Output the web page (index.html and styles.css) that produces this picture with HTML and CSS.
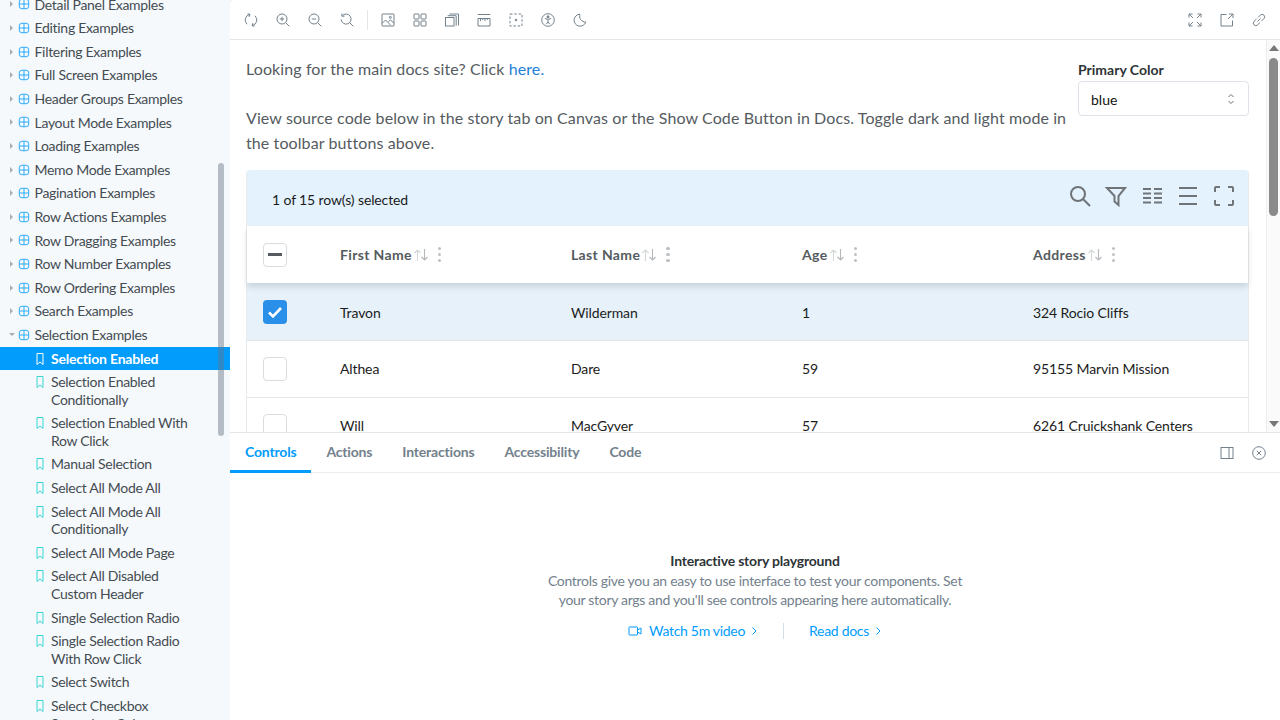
FILE: index.html
```html
<!DOCTYPE html>
<html lang="en">
<head>
    <meta charset="UTF-8">
    <title>Selection Enabled</title>
    <link rel="stylesheet" href="styles.css">
</head>
<body>
<div class="app">
    <nav class="sidebar">
        <ul class="tree">
            <li class="comp"><span class="caret"></span><svg class="grid-ico" viewBox="0 0 14 14"><rect x="1.5" y="1.5" width="11" height="11" rx="3"/><path d="M7 1.5v11M1.5 7h11"/></svg>Detail Panel Examples</li>
            <li class="comp"><span class="caret"></span><svg class="grid-ico" viewBox="0 0 14 14"><rect x="1.5" y="1.5" width="11" height="11" rx="3"/><path d="M7 1.5v11M1.5 7h11"/></svg>Editing Examples</li>
            <li class="comp"><span class="caret"></span><svg class="grid-ico" viewBox="0 0 14 14"><rect x="1.5" y="1.5" width="11" height="11" rx="3"/><path d="M7 1.5v11M1.5 7h11"/></svg>Filtering Examples</li>
            <li class="comp"><span class="caret"></span><svg class="grid-ico" viewBox="0 0 14 14"><rect x="1.5" y="1.5" width="11" height="11" rx="3"/><path d="M7 1.5v11M1.5 7h11"/></svg>Full Screen Examples</li>
            <li class="comp"><span class="caret"></span><svg class="grid-ico" viewBox="0 0 14 14"><rect x="1.5" y="1.5" width="11" height="11" rx="3"/><path d="M7 1.5v11M1.5 7h11"/></svg>Header Groups Examples</li>
            <li class="comp"><span class="caret"></span><svg class="grid-ico" viewBox="0 0 14 14"><rect x="1.5" y="1.5" width="11" height="11" rx="3"/><path d="M7 1.5v11M1.5 7h11"/></svg>Layout Mode Examples</li>
            <li class="comp"><span class="caret"></span><svg class="grid-ico" viewBox="0 0 14 14"><rect x="1.5" y="1.5" width="11" height="11" rx="3"/><path d="M7 1.5v11M1.5 7h11"/></svg>Loading Examples</li>
            <li class="comp"><span class="caret"></span><svg class="grid-ico" viewBox="0 0 14 14"><rect x="1.5" y="1.5" width="11" height="11" rx="3"/><path d="M7 1.5v11M1.5 7h11"/></svg>Memo Mode Examples</li>
            <li class="comp"><span class="caret"></span><svg class="grid-ico" viewBox="0 0 14 14"><rect x="1.5" y="1.5" width="11" height="11" rx="3"/><path d="M7 1.5v11M1.5 7h11"/></svg>Pagination Examples</li>
            <li class="comp"><span class="caret"></span><svg class="grid-ico" viewBox="0 0 14 14"><rect x="1.5" y="1.5" width="11" height="11" rx="3"/><path d="M7 1.5v11M1.5 7h11"/></svg>Row Actions Examples</li>
            <li class="comp"><span class="caret"></span><svg class="grid-ico" viewBox="0 0 14 14"><rect x="1.5" y="1.5" width="11" height="11" rx="3"/><path d="M7 1.5v11M1.5 7h11"/></svg>Row Dragging Examples</li>
            <li class="comp"><span class="caret"></span><svg class="grid-ico" viewBox="0 0 14 14"><rect x="1.5" y="1.5" width="11" height="11" rx="3"/><path d="M7 1.5v11M1.5 7h11"/></svg>Row Number Examples</li>
            <li class="comp"><span class="caret"></span><svg class="grid-ico" viewBox="0 0 14 14"><rect x="1.5" y="1.5" width="11" height="11" rx="3"/><path d="M7 1.5v11M1.5 7h11"/></svg>Row Ordering Examples</li>
            <li class="comp"><span class="caret"></span><svg class="grid-ico" viewBox="0 0 14 14"><rect x="1.5" y="1.5" width="11" height="11" rx="3"/><path d="M7 1.5v11M1.5 7h11"/></svg>Search Examples</li>
            <li class="comp"><span class="caret open"></span><svg class="grid-ico" viewBox="0 0 14 14"><rect x="1.5" y="1.5" width="11" height="11" rx="3"/><path d="M7 1.5v11M1.5 7h11"/></svg>Selection Examples</li>
            <li class="story active"><svg class="mark-ico" viewBox="0 0 14 14"><path d="M4 1.5h6v11l-3-2.5-3 2.5z"/></svg><span>Selection Enabled</span></li>
            <li class="story"><svg class="mark-ico" viewBox="0 0 14 14"><path d="M4 1.5h6v11l-3-2.5-3 2.5z"/></svg><span>Selection Enabled Conditionally</span></li>
            <li class="story"><svg class="mark-ico" viewBox="0 0 14 14"><path d="M4 1.5h6v11l-3-2.5-3 2.5z"/></svg><span>Selection Enabled With Row Click</span></li>
            <li class="story"><svg class="mark-ico" viewBox="0 0 14 14"><path d="M4 1.5h6v11l-3-2.5-3 2.5z"/></svg><span>Manual Selection</span></li>
            <li class="story"><svg class="mark-ico" viewBox="0 0 14 14"><path d="M4 1.5h6v11l-3-2.5-3 2.5z"/></svg><span>Select All Mode All</span></li>
            <li class="story"><svg class="mark-ico" viewBox="0 0 14 14"><path d="M4 1.5h6v11l-3-2.5-3 2.5z"/></svg><span>Select All Mode All Conditionally</span></li>
            <li class="story"><svg class="mark-ico" viewBox="0 0 14 14"><path d="M4 1.5h6v11l-3-2.5-3 2.5z"/></svg><span>Select All Mode Page</span></li>
            <li class="story"><svg class="mark-ico" viewBox="0 0 14 14"><path d="M4 1.5h6v11l-3-2.5-3 2.5z"/></svg><span>Select All Disabled Custom Header</span></li>
            <li class="story"><svg class="mark-ico" viewBox="0 0 14 14"><path d="M4 1.5h6v11l-3-2.5-3 2.5z"/></svg><span>Single Selection Radio</span></li>
            <li class="story"><svg class="mark-ico" viewBox="0 0 14 14"><path d="M4 1.5h6v11l-3-2.5-3 2.5z"/></svg><span>Single Selection Radio With Row Click</span></li>
            <li class="story"><svg class="mark-ico" viewBox="0 0 14 14"><path d="M4 1.5h6v11l-3-2.5-3 2.5z"/></svg><span>Select Switch</span></li>
            <li class="story"><svg class="mark-ico" viewBox="0 0 14 14"><path d="M4 1.5h6v11l-3-2.5-3 2.5z"/></svg><span>Select Checkbox Secondary Color</span></li>
        </ul>
        <div class="side-thumb"></div>
    </nav>

    <main class="main">
        <header class="toolbar">
            <button class="tool"><svg viewBox="0 0 14 14"><path d="M3 11.200A5.800 5.800 0 0 1 6 1.300M11 2.800A5.800 5.800 0 0 1 8 12.700M3.500 .8L6 1.300 5 3.900M10.500 13.200L8 12.700 9 10.100"/></svg></button>
            <button class="tool"><svg viewBox="0 0 14 14"><circle cx="6" cy="6" r="5"/><path d="M9.700 9.700l3.600 3.600M6 3.800v4.400M3.800 6h4.400"/></svg></button>
            <button class="tool"><svg viewBox="0 0 14 14"><circle cx="6" cy="6" r="5"/><path d="M9.700 9.700l3.600 3.600M3.800 6h4.400"/></svg></button>
            <button class="tool"><svg viewBox="0 0 14 14"><path d="M2.300 2.800A5 5 0 1 1 1.100 6.500M9.700 9.700l3.600 3.600M1.900 .6v2.600h2.600"/></svg></button>
            <span class="divider"></span>
            <button class="tool"><svg viewBox="0 0 14 14"><rect x="1" y="1" width="12" height="12" rx=".5"/><circle cx="9.300" cy="4.300" r="1"/><path d="M1 10.500l3.500-3.500 5 5M7.500 8.500l2-1.500 3.500 3"/></svg></button>
            <button class="tool"><svg viewBox="0 0 14 14"><rect x="1" y="1" width="5" height="5" rx=".5"/><rect x="8" y="1" width="5" height="5" rx=".5"/><rect x="1" y="8" width="5" height="5" rx=".5"/><rect x="8" y="8" width="5" height="5" rx=".5"/></svg></button>
            <button class="tool"><svg viewBox="0 0 14 14"><rect x=".5" y="4.500" width="8.500" height="8.500"/><path d="M2.700 2.700h8.500v10M4.500 1h9v11.500"/></svg></button>
            <button class="tool"><svg viewBox="0 0 14 14"><path d="M.8 1.500h12.400M1 5.500h12v7.500H1zM3.500 5.500v2.500M5.700 5.500v1.500M8 5.500v2.500M10.300 5.500v1.500"/></svg></button>
            <button class="tool"><svg viewBox="0 0 14 14"><rect x="1" y="1" width="12" height="12" stroke-dasharray="2.500 1.800"/><circle class="fill" cx="7" cy="7" r=".8"/></svg></button>
            <button class="tool"><svg viewBox="0 0 14 14"><circle cx="7" cy="7" r="6.300"/><circle class="fill" cx="7" cy="3.800" r="1"/><path d="M3.800 5.500L7 6.300l3.200-.8M7 6.300v2.700M5.200 11.200L7 9l1.800 2.200"/></svg></button>
            <button class="tool"><svg viewBox="0 0 14 14"><path d="M7 1.200A6 6 0 1 0 12.800 9 5.800 5.800 0 0 1 7 1.200z"/></svg></button>
            <span class="toolbar-gap"></span>
            <button class="tool"><svg viewBox="0 0 14 14"><path d="M5 5L1 1M1 4.500V1h3.500M9 5l4-4M9.500 1H13v3.500M5 9l-4 4M1 9.500V13h3.500M9 9l4 4M13 9.500V13H9.500"/></svg></button>
            <button class="tool"><svg viewBox="0 0 14 14"><path d="M6.500 1.500H1v11.500h11.500V7.500M8 6l5-5M9 1h4v4"/></svg></button>
            <button class="tool"><svg viewBox="0 0 14 14"><path d="M5.500 8.500l3-3M6 4.500l2.400-2.400a2.400 2.400 0 0 1 3.500 3.500L9.500 8M8 9.500l-2.400 2.400a2.400 2.400 0 0 1-3.500-3.500L4.500 6"/></svg></button>
        </header>

        <section class="canvas">
            <div class="intro">
                <div class="intro-text">
                    <p>Looking for the main docs site? Click <a class="link" href="#">here.</a></p>
                    <p>View source code below in the story tab on Canvas or the Show Code Button in Docs. Toggle dark and light mode in the toolbar buttons above.</p>
                </div>
                <div class="color-pick">
                    <label class="pick-label">Primary Color</label>
                    <div class="pick-box"><span class="pick-value">blue</span>
                        <svg viewBox="0 0 10 14"><path d="M2.500 5L5 2.500 7.500 5M2.500 9L5 11.500 7.500 9"/></svg>
                    </div>
                </div>
            </div>

            <div class="paper">
                <div class="table-top">
                    <span class="sel-count">1 of 15 row(s) selected</span>
                    <div class="top-icons">
                        <svg viewBox="0 0 24 24"><circle cx="10" cy="10" r="7"/><path d="M15 15l7 7"/></svg>
                        <svg viewBox="0 0 24 24"><path d="M3 4h18l-6.500 8v9l-4-3.500V12z"/></svg>
                        <svg viewBox="0 0 24 24"><path d="M3 5h8M3 9.500h8M3 14h8M3 18.500h8M14 5h8M14 9.500h8M14 14h8M14 18.500h8"/></svg>
                        <svg viewBox="0 0 24 24"><path d="M3 4h18M3 12h18M3 20h18"/></svg>
                        <svg viewBox="0 0 24 24"><path d="M3 8V4a1 1 0 0 1 1-1h4M16 3h4a1 1 0 0 1 1 1v4M3 16v4a1 1 0 0 0 1 1h4M21 16v4a1 1 0 0 1-1 1h-4"/></svg>
                    </div>
                </div>
                <div class="row head-row">
                    <div class="cell check-cell"><span class="box box-mixed"></span></div>
                    <div class="cell head-cell"><b>First Name</b><svg class="sort" viewBox="0 0 16 14"><path class="sort-up" d="M4.500 13V2M1.500 5l3-3 3 3"/><path d="M11.500 1v11M8.500 9l3 3 3-3"/></svg><span class="kebab"></span></div>
                    <div class="cell head-cell"><b>Last Name</b><svg class="sort" viewBox="0 0 16 14"><path class="sort-up" d="M4.500 13V2M1.500 5l3-3 3 3"/><path d="M11.500 1v11M8.500 9l3 3 3-3"/></svg><span class="kebab"></span></div>
                    <div class="cell head-cell"><b>Age</b><svg class="sort" viewBox="0 0 16 14"><path class="sort-up" d="M4.500 13V2M1.500 5l3-3 3 3"/><path d="M11.500 1v11M8.500 9l3 3 3-3"/></svg><span class="kebab"></span></div>
                    <div class="cell head-cell"><b>Address</b><svg class="sort" viewBox="0 0 16 14"><path class="sort-up" d="M4.500 13V2M1.500 5l3-3 3 3"/><path d="M11.500 1v11M8.500 9l3 3 3-3"/></svg><span class="kebab"></span></div>
                </div>
                <div class="row row-selected">
                    <div class="cell check-cell"><span class="box box-on"><svg viewBox="0 0 24 24"><path d="M6 12.500l4 4 8-8.500"/></svg></span></div>
                    <div class="cell body-cell">Travon</div>
                    <div class="cell body-cell">Wilderman</div>
                    <div class="cell body-cell">1</div>
                    <div class="cell body-cell">324 Rocio Cliffs</div>
                </div>
                <div class="row">
                    <div class="cell check-cell"><span class="box"></span></div>
                    <div class="cell body-cell">Althea</div>
                    <div class="cell body-cell">Dare</div>
                    <div class="cell body-cell">59</div>
                    <div class="cell body-cell">95155 Marvin Mission</div>
                </div>
                <div class="row">
                    <div class="cell check-cell"><span class="box"></span></div>
                    <div class="cell body-cell">Will</div>
                    <div class="cell body-cell">MacGyver</div>
                    <div class="cell body-cell">57</div>
                    <div class="cell body-cell">6261 Cruickshank Centers</div>
                </div>
            </div>

            <div class="scrollbar">
                <span class="arrow-up"></span>
                <span class="thumb"></span>
                <span class="arrow-down"></span>
            </div>
        </section>

        <section class="addons">
            <div class="tabs">
                <a class="tab tab-on">Controls</a>
                <a class="tab">Actions</a>
                <a class="tab">Interactions</a>
                <a class="tab">Accessibility</a>
                <a class="tab">Code</a>
                <span class="toolbar-gap"></span>
                <button class="tool"><svg viewBox="0 0 14 14"><rect x="1" y="1.500" width="12" height="11"/><path d="M9 1.500v11"/></svg></button>
                <button class="tool"><svg viewBox="0 0 14 14"><circle cx="7" cy="7" r="6.300"/><path d="M4.800 4.800l4.400 4.400M9.200 4.800l-4.400 4.400"/></svg></button>
            </div>
            <div class="empty">
                <h3 class="empty-title">Interactive story playground</h3>
                <p class="empty-text">Controls give you an easy to use interface to test your components. Set your story args and you'll see controls appearing here automatically.</p>
                <div class="empty-links">
                    <a class="doc-link"><svg class="video" viewBox="0 0 14 14"><rect x="1" y="3" width="8.500" height="8" rx=".5"/><path d="M9.500 6l3.500-2v6l-3.500-2"/></svg>Watch 5m video<svg class="chev" viewBox="0 0 8 10"><path d="M2.500 1.500L6 5 2.500 8.500"/></svg></a>
                    <span class="link-sep"></span>
                    <a class="doc-link">Read docs<svg class="chev" viewBox="0 0 8 10"><path d="M2.500 1.500L6 5 2.500 8.500"/></svg></a>
                </div>
            </div>
        </section>
    </main>
</div>
</body>
</html>
```

FILE: styles.css
```css
* {
    box-sizing: border-box;
}

html, body {
    height: 100%;
}

body {
    margin: 0;
    overflow: hidden;
    font-family: 'Lato', 'Noto Sans', sans-serif;
    font-size: 14px;
    color: #2e3438;
    background-color: #f6f9fc;
}

.app {
    display: flex;
    height: 720px;
}

/* Sidebar tree */
.sidebar {
    position: relative;
    width: 230px;
    flex: none;
    overflow: hidden;
    background-color: #f6f9fc;
}

.tree {
    list-style: none;
    margin: -7.400px 0 0;
    padding: 0;
    color: #444c52;
    line-height: 17.600px;
    letter-spacing: -0.3px;
}

.comp {
    display: flex;
    align-items: center;
    padding: 3px 0 3px 10px;
}

.caret {
    width: 0;
    height: 0;
    margin-right: 5px;
    border-left: 3px solid #a5adb4;
    border-top: 3px solid transparent;
    border-bottom: 3px solid transparent;
}

.caret.open {
    margin-left: -1px;
    margin-right: 3px;
    border-top: 3px solid #a5adb4;
    border-left: 3px solid transparent;
    border-right: 3px solid transparent;
    border-bottom: 0;
}

.grid-ico {
    width: 12px;
    height: 12px;
    margin-right: 4.500px;
    fill: none;
    stroke: #1ea7fd;
    stroke-width: 1.100;
}

.story {
    display: flex;
    padding: 3px 30px 3px 33px;
}

.mark-ico {
    flex: none;
    width: 14px;
    height: 14px;
    margin: 2px 4px 0 0;
    fill: none;
    stroke: #37d5d3;
    stroke-width: 1;
}

.active {
    background-color: #029cfd;
    color: #fff;
    font-weight: 700;
    letter-spacing: -0.2px;
}

.active .mark-ico {
    stroke: #fff;
}

.side-thumb {
    position: absolute;
    left: 218px;
    top: 163px;
    width: 6px;
    height: 273px;
    border-radius: 3px;
    background-color: rgba(100, 115, 130, 0.45);
}

/* Main column */
.main {
    flex: 1;
    min-width: 0;
    display: flex;
    flex-direction: column;
    background-color: #fff;
    border-top-left-radius: 4px;
    box-shadow: 0 0 3px rgba(0, 0, 0, 0.12);
}

.toolbar {
    display: flex;
    align-items: center;
    flex: none;
    height: 40px;
    gap: 4px;
    padding: 0 7px;
    border-bottom: 1px solid #e3e6e8;
}

.tool {
    display: flex;
    align-items: center;
    justify-content: center;
    width: 28px;
    height: 28px;
    padding: 0;
    border: none;
    background: none;
}

.tool svg {
    width: 14px;
    height: 14px;
    fill: none;
    stroke: #73818c;
    stroke-width: 1;
}

.tool svg .fill {
    fill: #73818c;
}

.divider {
    width: 1px;
    height: 20px;
    margin: 0 2px;
    background-color: #e3e6e8;
}

.toolbar-gap {
    flex: 1;
}

/* Preview */
.canvas {
    position: relative;
    flex: none;
    height: 392px;
    overflow: hidden;
    padding: 16px 31px 0 16px;
}

.intro {
    display: flex;
    justify-content: space-between;
    height: 114px;
}

.intro-text {
    width: 826px;
    font-size: 16px;
    line-height: 25px;
    letter-spacing: 0.1px;
    color: #555b60;
}

.intro-text p {
    margin: 0 0 24px;
}

.link {
    color: #1e7fd8;
    text-decoration: none;
}

.color-pick {
    width: 171px;
    margin-top: 4px;
}

.pick-label {
    display: block;
    height: 21px;
    font-weight: 700;
    color: #2e3438;
    line-height: 20px;
}

.pick-box {
    display: flex;
    align-items: center;
    justify-content: space-between;
    height: 35px;
    padding: 0 12px;
    border: 1px solid #dfe2e8;
    border-radius: 4px;
    color: #111;
}

.pick-value {
    padding-top: 2px;
}

.pick-box svg {
    width: 10px;
    height: 14px;
    fill: none;
    stroke: #6b7075;
}

.paper {
    border-radius: 4px;
    border-left: 1px solid #e8eaec;
    border-right: 1px solid #e8eaec;
    font-size: 14px;
    letter-spacing: -0.12px;
    color: #1c1c1c;
}

.table-top {
    display: flex;
    align-items: center;
    justify-content: space-between;
    height: 56px;
    padding: 0 12.500px 0 25px;
    background-color: #e3f2fd;
    border-radius: 4px 4px 0 0;
}

.sel-count {
    padding-top: 2px;
}

.top-icons {
    display: flex;
    gap: 12px;
    margin-top: -4px;
}

.top-icons svg {
    width: 24px;
    height: 24px;
    fill: none;
    stroke: #6f7478;
    stroke-width: 2;
}

.row {
    display: grid;
    grid-template-columns: 93px 231px 231px 231px 1fr;
    height: 57px;
    border-bottom: 1px solid #e6e6e6;
}

.head-row {
    position: relative;
    background-color: #fff;
    border-bottom: 0;
    box-shadow: 0 4px 6px rgba(0, 0, 0, 0.12);
    color: #555b60;
    letter-spacing: 0.35px;
}

.row-selected {
    height: 58px;
    background-color: #e6f1fa;
}

.cell {
    display: flex;
    align-items: center;
    min-width: 0;
}

.body-cell {
    padding-bottom: 2px;
}

.row-selected .body-cell {
    padding-bottom: 0;
    padding-top: 2px;
}

.check-cell {
    padding-left: 16px;
}

.box {
    width: 24px;
    height: 24px;
    border: 1px solid #d9dde0;
    border-radius: 4px;
    background-color: #fff;
}

.box-mixed::before {
    content: "";
    display: block;
    width: 14px;
    height: 3px;
    margin: 9px 0 0 4px;
    background-color: #555b60;
}

.box-on {
    border: none;
    background-color: #2a8fe8;
}

.box-on svg {
    display: block;
    fill: none;
    stroke: #fff;
    stroke-width: 2.600;
}

.sort {
    width: 16px;
    height: 14px;
    margin-left: 1px;
    fill: none;
    stroke: #b4b8bc;
    stroke-width: 1.100;
}

.sort-up {
    stroke: #d4d7da;
}

.kebab {
    width: 3.500px;
    height: 3.500px;
    margin-left: 9px;
    border-radius: 50%;
    background-color: #bfc2c5;
    box-shadow: 0 -6px 0 #bfc2c5, 0 6px 0 #bfc2c5;
}

.scrollbar {
    position: absolute;
    right: 0;
    top: 0;
    bottom: 0;
    width: 14px;
    background-color: #fafafa;
    border-left: 1px solid #eee;
}

.arrow-up, .arrow-down {
    position: absolute;
    left: 2px;
    width: 0;
    height: 0;
    border-left: 5px solid transparent;
    border-right: 5px solid transparent;
}

.arrow-up {
    top: 5px;
    border-bottom: 6px solid #777;
}

.arrow-down {
    bottom: 5px;
    border-top: 6px solid #777;
}

.thumb {
    position: absolute;
    left: 2px;
    top: 18px;
    width: 9px;
    height: 158px;
    border-radius: 5px;
    background-color: #8a8a8a;
}

/* Addon panel */
.addons {
    flex: 1;
    display: flex;
    flex-direction: column;
    border-top: 1px solid #e3e6e8;
    position: relative;
}

.tabs {
    display: flex;
    align-items: center;
    flex: none;
    height: 40px;
    padding-right: 7px;
    gap: 4px;
    border-bottom: 1px solid #e9edf0;
}

.tab {
    display: flex;
    align-items: center;
    height: 40px;
    padding: 0 15px 2px;
    margin-right: -4px;
    font-weight: 700;
    letter-spacing: -0.18px;
    color: #73818c;
}

.tab-on {
    color: #029cfd;
    border-bottom: 3px solid #029cfd;
    padding-bottom: 0;
}

.empty {
    flex: 1;
    padding-top: 78px;
    text-align: center;
    letter-spacing: -0.3px;
}

.empty-title {
    margin: 0 0 1px;
    font-size: 14px;
    line-height: 19px;
    font-weight: 700;
    letter-spacing: -0.2px;
    color: #2e3438;
}

.empty-text {
    width: 425px;
    margin: 0 auto;
    line-height: 19px;
    color: #73818c;
}

.empty-links {
    display: flex;
    justify-content: center;
    align-items: center;
    gap: 25px;
    margin-top: 13px;
}

.doc-link {
    display: flex;
    align-items: center;
    color: #029cfd;
}

.video {
    width: 14px;
    height: 14px;
    margin-right: 7px;
    fill: none;
    stroke: #029cfd;
}

.chev {
    width: 8px;
    height: 10px;
    margin-left: 5px;
    fill: none;
    stroke: #029cfd;
}

.link-sep {
    width: 1px;
    height: 16px;
    background-color: #d5dde5;
}
```
